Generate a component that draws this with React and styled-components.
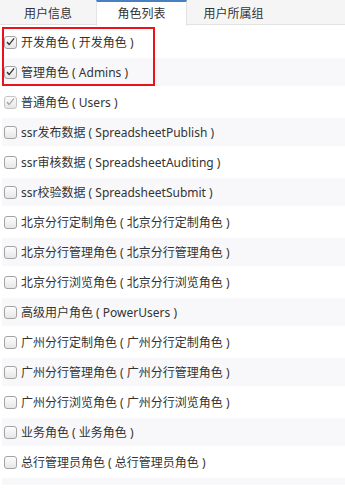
import React from "react";
import styled, { createGlobalStyle } from "styled-components";

const GlobalStyle = createGlobalStyle`
  body {
    margin: 0;
    background: #fff;
    font-family: "Noto Sans", "Noto Sans CJK SC", sans-serif;
  }
`;

const Page = styled.div`
  position: relative;
  width: 345px;
  height: 493px;
  overflow: hidden;
  background: #fff;
`;

const TabBar = styled.div`
  display: flex;
  height: 25px;
  background: #f5f5f5;
  border-bottom: 1px solid #e3e3e3;
  box-sizing: border-box;
`;

const Tab = styled.div`
  width: ${({ w }) => w}px;
  box-sizing: border-box;
  display: flex;
  align-items: center;
  justify-content: center;
  font-size: 12px;
  color: #333;
  background: ${({ active }) => (active ? "#fff" : "transparent")};
  border-top: 2px solid ${({ active }) => (active ? "#4a7fc1" : "transparent")};
  border-left: 1px solid ${({ active }) => (active ? "#e3e3e3" : "transparent")};
  border-right: 1px solid ${({ active }) => (active ? "#e3e3e3" : "transparent")};
  height: ${({ active }) => (active ? "26px" : "24px")};
  padding-bottom: ${({ active }) => (active ? "2px" : "0")};
`;

const List = styled.div`
  padding: 3px 0 0 2px;
`;

const Row = styled.div`
  display: flex;
  align-items: center;
  gap: 4px;
  height: 28px;
  margin-bottom: 2px;
  padding-left: 2px;
  background: ${({ striped }) => (striped ? "#f8f8fa" : "transparent")};
  font-size: 12px;
  color: #333;
  white-space: nowrap;
`;

const Box = styled.span`
  width: 13px;
  height: 13px;
  box-sizing: border-box;
  border: 1px solid ${({ disabled }) => (disabled ? "#c4c4c4" : "#a3a3a3")};
  border-radius: 3px;
  background: linear-gradient(#fdfdfd, #e6e6e6);
  display: flex;
  align-items: center;
  justify-content: center;
  flex: none;
`;

const Tail = styled.div`
  height: 7px;
  background: #f8f8fa;
`;

const Marker = styled.div`
  position: absolute;
  left: 2px;
  top: 27px;
  width: 153px;
  height: 59px;
  border: 2px solid #e8141b;
  box-sizing: border-box;
  pointer-events: none;
`;

const roles = [
  { name: "开发角色", code: "开发角色", checked: true },
  { name: "管理角色", code: "Admins", checked: true },
  { name: "普通角色", code: "Users", checked: true, disabled: true },
  { name: "ssr发布数据", code: "SpreadsheetPublish" },
  { name: "ssr审核数据", code: "SpreadsheetAuditing" },
  { name: "ssr校验数据", code: "SpreadsheetSubmit" },
  { name: "北京分行定制角色", code: "北京分行定制角色" },
  { name: "北京分行管理角色", code: "北京分行管理角色" },
  { name: "北京分行浏览角色", code: "北京分行浏览角色" },
  { name: "高级用户角色", code: "PowerUsers" },
  { name: "广州分行定制角色", code: "广州分行定制角色" },
  { name: "广州分行管理角色", code: "广州分行管理角色" },
  { name: "广州分行浏览角色", code: "广州分行浏览角色" },
  { name: "业务角色", code: "业务角色" },
  { name: "总行管理员角色", code: "总行管理员角色" },
];

const Check = ({ checked, disabled }) => (
  <Box disabled={disabled}>
    {checked && (
      <svg width="11" height="11" viewBox="0 0 11 11">
        <path
          d="M1.5 5.8 L4.2 8.6 L9.6 1.8 L8.6 1 L4.2 6.4 L2.6 4.6 Z"
          fill={disabled ? "#a8a8a8" : "#333"}
        />
      </svg>
    )}
  </Box>
);

const App = () => {
  return (
    <Page>
      <GlobalStyle />
      <TabBar>
        <Tab w={96}>用户信息</Tab>
        <Tab w={91} active>角色列表</Tab>
        <Tab w={93}>用户所属组</Tab>
      </TabBar>
      <List>
        {roles.map((r, i) => (
          <Row key={r.name} striped={i % 2 === 1}>
            <Check checked={r.checked} disabled={r.disabled} />
            <span>{`${r.name} ( ${r.code} )`}</span>
          </Row>
        ))}
        <Tail />
      </List>
      <Marker />
    </Page>
  );
};

export default App;
